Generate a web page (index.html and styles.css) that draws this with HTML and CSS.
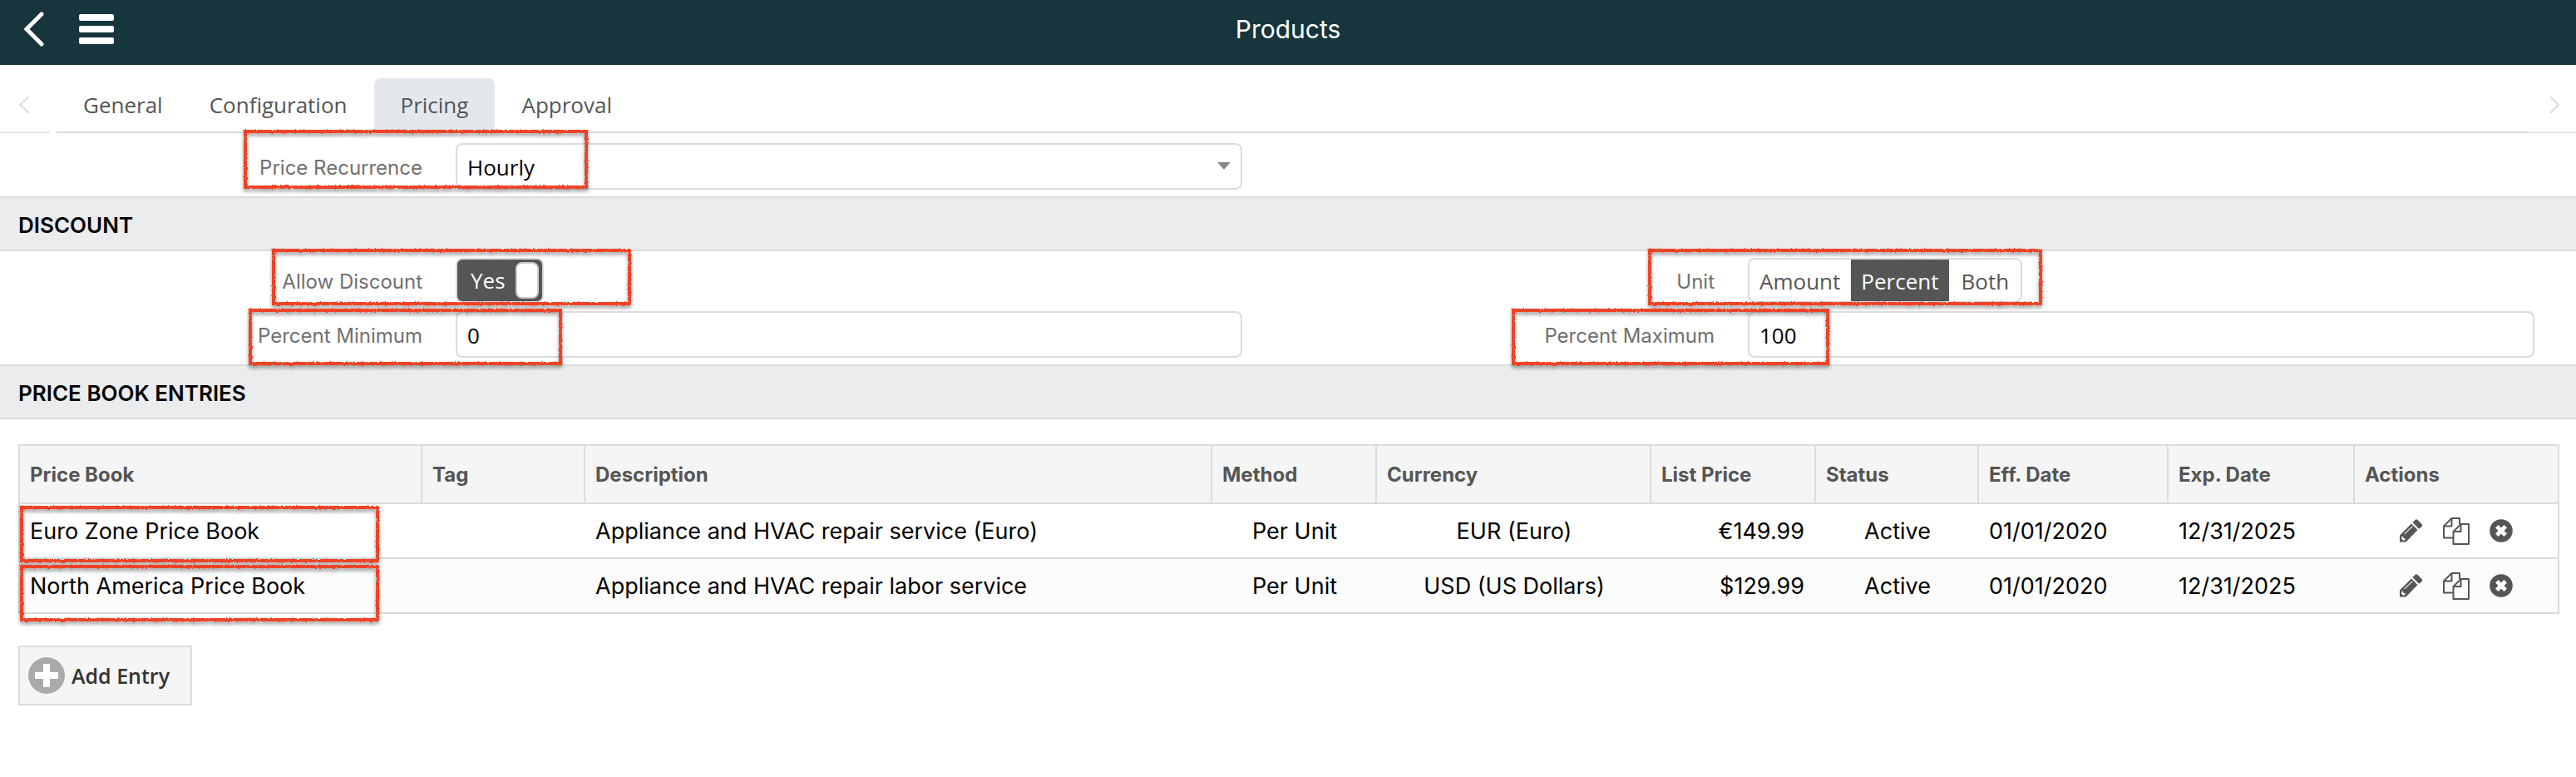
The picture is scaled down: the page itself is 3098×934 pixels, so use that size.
FILE: index.html
```html
<!DOCTYPE html>
<html lang="en">
<head>
<meta charset="utf-8">
<title>Products</title>
<link rel="stylesheet" href="styles.css">
</head>
<body>
<svg class="defs" aria-hidden="true">
  <filter id="rough" x="-5%" y="-20%" width="110%" height="140%" color-interpolation-filters="sRGB">
    <feTurbulence type="fractalNoise" baseFrequency="0.5" numOctaves="2" seed="4" result="noise"/>
    <feDisplacementMap in="SourceGraphic" in2="noise" scale="3" xChannelSelector="R" yChannelSelector="G"/>
  </filter>
  <symbol id="pencil" viewBox="0 0 28 28">
    <path d="M0 27.500V19.500L14 5.500L21.500 13L7.500 27.500Z" fill="#555"/>
    <path d="M15.500 4L18.500 1Q20 -.3 21.500 1L26.500 6Q27.800 7.500 26.500 9L23.300 11.700Z" fill="#555"/>
    <path d="M5.500 18L15.500 8.500" stroke="#ddd" stroke-width="1.200" fill="none"/>
    <path d="M2 21.500L4 20.500L4.500 23L7 23.500L6 25.500H4L2 23.500Z" fill="#fff"/>
  </symbol>
  <symbol id="copy" viewBox="0 0 32 33">
    <g fill="none" stroke="#555" stroke-width="2" stroke-linejoin="round">
      <path d="M12 24.500H1V10.500L10.500 1H20V8"/>
      <path d="M10.500 1V10.500H1"/>
      <path d="M12.500 17L21.500 8H31V32H12.500Z"/>
      <path d="M21.500 8V17H12.500"/>
    </g>
  </symbol>
  <symbol id="remove" viewBox="0 0 28 28">
    <circle cx="14" cy="14" r="13.800" fill="#555"/>
    <path d="M8.800 8.800L19.200 19.200M19.200 8.800L8.800 19.200" stroke="#fff" stroke-width="5"/>
  </symbol>
</svg>

<header class="topbar">
  <div class="topbar-nav">
    <button class="icon-btn" aria-label="Back"><svg width="26" height="42" viewBox="0 0 26 42"><path d="M22 3L4 21L22 39" fill="none" stroke="#fff" stroke-width="5" stroke-linecap="round"/></svg></button>
    <button class="icon-btn" aria-label="Menu"><svg width="42" height="36" viewBox="0 0 42 36" fill="#fff"><rect y="0" width="42" height="8" rx="2"/><rect y="14" width="42" height="8" rx="2"/><rect y="28" width="42" height="8" rx="2"/></svg></button>
  </div>
  <h1 class="title">Products</h1>
</header>

<nav class="tabs">
  <button class="tab-scroll" aria-label="Previous tabs"><svg width="14" height="20" viewBox="0 0 14 20"><path d="M12 1L2 10L12 19" fill="none" stroke="#dcdcdc" stroke-width="2" stroke-linecap="round"/></svg></button>
  <div class="tab-list">
    <a class="tab tab-first" href="#general">General</a>
    <a class="tab" href="#configuration">Configuration</a>
    <a class="tab tab-active" href="#pricing">Pricing</a>
    <a class="tab" href="#approval">Approval</a>
  </div>
  <button class="tab-scroll" aria-label="Next tabs"><svg width="14" height="20" viewBox="0 0 14 20"><path d="M2 1L11 10L2 19" fill="none" stroke="#dcdcdc" stroke-width="2" stroke-linecap="round"/></svg></button>
</nav>

<main>
  <div class="form form-first">
    <div class="field">
      <label class="label" for="recurrence">Price Recurrence</label>
      <div class="select-wrap">
        <select class="input" id="recurrence"><option>Hourly</option></select>
        <svg class="caret" width="14" height="9" viewBox="0 0 14 9"><path d="M0 0H14V1L7 9L0 1Z" fill="#888"/></svg>
      </div>
      <div class="mark mark-recurrence"></div>
    </div>
  </div>

  <h2 class="band">DISCOUNT</h2>
  <div class="form">
    <div class="field">
      <label class="label" for="allow">Allow Discount</label>
      <label class="toggle" for="allow"><input class="hidden-input" type="checkbox" id="allow" checked><span>Yes</span><span class="knob"></span></label>
      <div class="mark mark-allow"></div>
    </div>
    <div class="field">
      <span class="label" id="unit-label">Unit</span>
      <div class="segments" role="radiogroup" aria-labelledby="unit-label">
        <label class="segment"><input class="hidden-input" type="radio" name="unit">Amount</label>
        <label class="segment segment-on"><input class="hidden-input" type="radio" name="unit" checked>Percent</label>
        <label class="segment"><input class="hidden-input" type="radio" name="unit">Both</label>
      </div>
      <div class="mark mark-unit"></div>
    </div>
    <div class="field">
      <label class="label" for="pmin">Percent Minimum</label>
      <input class="input" id="pmin" type="text" value="0">
      <div class="mark mark-min"></div>
    </div>
    <div class="field">
      <label class="label" for="pmax">Percent Maximum</label>
      <input class="input" id="pmax" type="text" value="100">
      <div class="mark mark-max"></div>
    </div>
  </div>

  <h2 class="band">PRICE BOOK ENTRIES</h2>
  <section class="entries">
    <table class="table">
      <colgroup><col class="c-book"><col class="c-tag"><col><col class="c-method"><col class="c-currency"><col class="c-price"><col class="c-status"><col class="c-eff"><col class="c-exp"><col class="c-actions"></colgroup>
      <thead>
        <tr><th>Price Book</th><th>Tag</th><th>Description</th><th>Method</th><th>Currency</th><th>List Price</th><th>Status</th><th>Eff. Date</th><th>Exp. Date</th><th>Actions</th></tr>
      </thead>
      <tbody>
        <tr>
          <td class="book">Euro Zone Price Book<div class="mark mark-row1"></div></td><td></td><td>Appliance and HVAC repair service (Euro)</td><td class="center">Per Unit</td><td class="center">EUR (Euro)</td><td class="right">€149.99</td><td class="center">Active</td><td>01/01/2020</td><td>12/31/2025</td>
          <td><div class="actions"><button class="icon-btn" aria-label="Edit"><svg width="28" height="28"><use href="#pencil"/></svg></button><button class="icon-btn" aria-label="Copy"><svg width="32" height="33"><use href="#copy"/></svg></button><button class="icon-btn" aria-label="Delete"><svg width="28" height="28"><use href="#remove"/></svg></button></div></td>
        </tr>
        <tr>
          <td class="book">North America Price Book<div class="mark mark-row2"></div></td><td></td><td>Appliance and HVAC repair labor service</td><td class="center">Per Unit</td><td class="center">USD (US Dollars)</td><td class="right">$129.99</td><td class="center">Active</td><td>01/01/2020</td><td>12/31/2025</td>
          <td><div class="actions"><button class="icon-btn" aria-label="Edit"><svg width="28" height="28"><use href="#pencil"/></svg></button><button class="icon-btn" aria-label="Copy"><svg width="32" height="33"><use href="#copy"/></svg></button><button class="icon-btn" aria-label="Delete"><svg width="28" height="28"><use href="#remove"/></svg></button></div></td>
        </tr>
      </tbody>
    </table>
    <button class="add"><svg width="44" height="44" viewBox="0 0 44 44"><circle cx="22" cy="22" r="22" fill="#aaa"/><path d="M18 8H26V18H36V26H26V36H18V26H8V18H18Z" fill="#fff"/></svg>Add Entry</button>
  </section>
</main>
</body>
</html>
```
FILE: styles.css
```css
* { box-sizing: border-box; }

body {
  margin: 0;
  background: #fff;
  color: #000;
  font-family: Inter, "Liberation Sans", sans-serif;
  font-size: 26px;
}

button { font: inherit; cursor: pointer; }
svg { display: block; }
.defs { position: absolute; width: 0; height: 0; }

.icon-btn {
  padding: 0;
  border: 0;
  background: none;
}

/* Top bar */
.topbar {
  display: grid;
  grid-template-columns: 1fr auto 1fr;
  align-items: center;
  height: 78px;
  padding: 0 28px 8px;
  background: #16353c;
}
.topbar-nav { display: flex; align-items: center; gap: 41px; }
.title {
  margin: 0;
  color: #fff;
  font-size: 30px;
  font-weight: 400;
  line-height: 36px;
}

/* Tabs */
.tabs {
  display: flex;
  align-items: stretch;
  height: 82px;
}
.tab-scroll {
  display: flex;
  align-items: center;
  width: 60px;
  padding: 16px 0 0 22px;
  border: 0;
  border-bottom: 2px solid #e4e8ec;
  background: none;
}
.tab-scroll:last-child { width: 58px; padding-left: 26px; }
.tab-list {
  display: flex;
  flex: 1;
  margin-left: 8px;
  padding-top: 16px;
  border-bottom: 2px solid #dcdcdc;
}
.tab {
  padding: 0 32px;
  border-radius: 8px 8px 0 0;
  color: #555;
  font-family: "Open Sans", sans-serif;
  line-height: 64px;
  text-decoration: none;
}
.tab-first { padding-right: 24px; }
.tab-active { background: #e4e8ed; }

/* Section heading bands */
.band {
  margin: 0;
  padding: 4px 22px 0;
  border: solid #dcdcdc;
  border-width: 2px 0;
  background: #ebecee;
  font-size: 26px;
  font-weight: 600;
  line-height: 58px;
}

/* Form */
.form {
  display: grid;
  grid-template-columns: 1fr 1fr;
  gap: 10px 60px;
  padding: 8px 50px 8px 0;
}
.form-first { padding-top: 12px; }
.field {
  position: relative;
  display: grid;
  grid-template-columns: 508px 1fr;
  column-gap: 40px;
  align-items: center;
}
.label {
  padding-top: 2px;
  color: #707070;
  font-size: 24px;
  text-align: right;
}
.input {
  display: block;
  width: 100%;
  height: 56px;
  padding: 2px 12px 0;
  border: 2px solid #dcdcdc;
  border-radius: 8px;
  appearance: none;
  background: #fff;
  color: #000;
  font-family: "Open Sans", sans-serif;
  font-size: 26px;
}
.select-wrap { position: relative; }
.caret { position: absolute; right: 15px; top: 23px; }

.hidden-input {
  position: absolute;
  opacity: 0;
  pointer-events: none;
}
.toggle {
  display: flex;
  align-items: center;
  justify-content: space-between;
  justify-self: start;
  width: 106px;
  height: 54px;
  padding: 0 4px 0 16px;
  border: 2px solid #dcdcdc;
  border-radius: 8px;
  background: #555;
  color: #fff;
  font-family: "Open Sans", sans-serif;
  font-weight: 500;
  line-height: 52px;
}
.knob {
  width: 28px;
  height: 44px;
  border: 2px solid #ccc;
  border-radius: 8px;
  background: #fff;
}
.segments {
  display: flex;
  justify-self: start;
  overflow: hidden;
  height: 54px;
  border: 2px solid #dcdcdc;
  border-radius: 8px;
  color: #555;
  font-family: "Open Sans", sans-serif;
  line-height: 52px;
}
.segment { padding: 0 13px 0 12px; }
.segment:last-child { padding: 0 14px; }
.segment-on { background: #555; color: #fff; font-weight: 500; }

/* Price book table */
.entries { padding: 30px 20px 30px 22px; }
.table {
  width: 100%;
  border: solid #dcdcdc;
  border-width: 2px 2px 0;
  border-spacing: 0;
  table-layout: fixed;
}
.c-book { width: 484px; }
.c-tag, .c-status { width: 196px; }
.c-method, .c-price { width: 198px; }
.c-currency { width: 330px; }
.c-eff { width: 228px; }
.c-exp { width: 224px; }
.c-actions { width: 244px; }
.table th {
  height: 70px;
  padding: 0 12px;
  border-right: 2px solid #dcdcdc;
  border-bottom: 2px solid #dcdcdc;
  background: #f5f5f5;
  color: #555;
  font-size: 24px;
  font-weight: 700;
  text-align: left;
}
.table th:last-child { border-right: 0; }
.table td {
  height: 66px;
  padding: 0 12px;
  border-bottom: 2px solid #d5dade;
  font-size: 27px;
}
.table tbody tr:nth-child(2) { background: #fcfcfc; }
.table .book { position: relative; }
.table .center { text-align: center; }
.table .right { padding-right: 14px; text-align: right; }
.actions {
  display: flex;
  align-items: center;
  justify-content: center;
  gap: 24px;
}

.add {
  display: flex;
  align-items: center;
  gap: 8px;
  height: 72px;
  margin-top: 38px;
  padding: 0 25px 0 10px;
  border: 2px solid #dcdcdc;
  background: #f5f5f5;
  color: #333;
  font-family: "Open Sans", sans-serif;
  font-size: 25px;
  font-weight: 600;
}

/* Hand-drawn callout boxes over the fields */
.mark {
  position: absolute;
  height: 68px;
  border: 4px solid #ee4326;
  filter: url(#rough) drop-shadow(0 3px 2px rgba(0, 0, 0, 0.4));
  pointer-events: none;
}
.mark-recurrence { left: 293px; top: -16px; width: 414px; height: 71px; }
.mark-allow { left: 327px; top: -11px; width: 432px; }
.mark-unit { left: 428px; top: -11px; width: 474px; }
.mark-min { left: 299px; top: -3px; width: 377px; }
.mark-max { left: 264px; top: -3px; width: 382px; }
.mark-row1 { left: 0; top: 2px; width: 432px; }
.mark-row2 { left: 0; top: 7px; width: 432px; }
```
